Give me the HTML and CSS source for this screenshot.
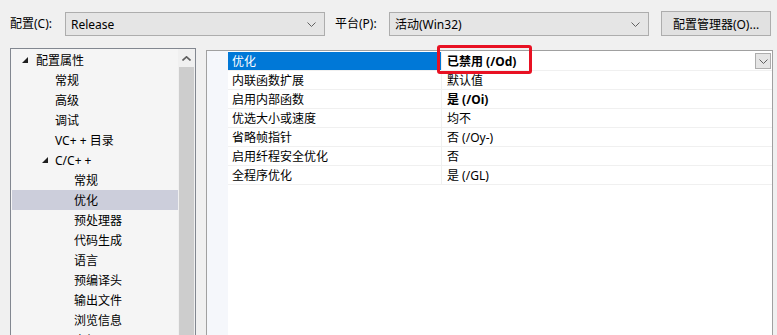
FILE: index.html
```html
<!DOCTYPE html>
<html lang="zh-CN">
<head>
  <meta charset="UTF-8" />
  <title>属性页</title>
  <link rel="stylesheet" href="styles.css">
</head>
<body>

  <!-- 顶部：配置 / 平台 -->
  <div class="toolbar">
    <span class="tb-label">配置(C):</span>
    <div class="combo">
      <span>Release</span>
      <svg class="chev" width="9" height="5" viewBox="0 0 9 5"><path d="M0.5 0.5 L4.5 4.5 L8.5 0.5" fill="none" stroke="#606060" stroke-width="1"/></svg>
    </div>
    <span class="tb-label tb-label2">平台(P):</span>
    <div class="combo">
      <span>活动(Win32)</span>
      <svg class="chev" width="9" height="5" viewBox="0 0 9 5"><path d="M0.5 0.5 L4.5 4.5 L8.5 0.5" fill="none" stroke="#606060" stroke-width="1"/></svg>
    </div>
    <button class="btn">配置管理器(O)...</button>
  </div>

  <div class="main">
    <!-- 左侧树 -->
    <div class="tree">
      <ul class="tree-list">
        <li class="lv0"><i class="tri"></i>配置属性</li>
        <li class="lv1">常规</li>
        <li class="lv1">高级</li>
        <li class="lv1">调试</li>
        <li class="lv1">VC+ + 目录</li>
        <li class="lv1 has-tri"><i class="tri"></i>C/C+ +</li>
        <li class="lv2">常规</li>
        <li class="lv2 selected">优化</li>
        <li class="lv2">预处理器</li>
        <li class="lv2">代码生成</li>
        <li class="lv2">语言</li>
        <li class="lv2">预编译头</li>
        <li class="lv2">输出文件</li>
        <li class="lv2">浏览信息</li>
        <li class="lv2">高级</li>
      </ul>
      <div class="vscroll">
        <div class="vs-up">
          <svg width="9" height="5" viewBox="0 0 9 5"><path d="M0.5 4.5 L4.5 0.8 L8.5 4.5" fill="none" stroke="#606060" stroke-width="1.6"/></svg>
        </div>
        <div class="vs-thumb"></div>
      </div>
    </div>

    <!-- 右侧属性表 -->
    <div class="grid">
      <div class="gutter"></div>
      <div class="rows">
        <div class="row active">
          <div class="cell-name">优化</div>
          <div class="cell-val bold">已禁用 (/Od)
            <span class="drop">
              <svg width="9" height="5" viewBox="0 0 9 5"><path d="M0.5 0.5 L4.5 4.5 L8.5 0.5" fill="none" stroke="#606060" stroke-width="1"/></svg>
            </span>
          </div>
        </div>
        <div class="row">
          <div class="cell-name">内联函数扩展</div>
          <div class="cell-val">默认值</div>
        </div>
        <div class="row">
          <div class="cell-name">启用内部函数</div>
          <div class="cell-val bold">是 (/Oi)</div>
        </div>
        <div class="row">
          <div class="cell-name">优选大小或速度</div>
          <div class="cell-val">均不</div>
        </div>
        <div class="row">
          <div class="cell-name">省略帧指针</div>
          <div class="cell-val">否 (/Oy-)</div>
        </div>
        <div class="row">
          <div class="cell-name">启用纤程安全优化</div>
          <div class="cell-val">否</div>
        </div>
        <div class="row">
          <div class="cell-name">全程序优化</div>
          <div class="cell-val">是 (/GL)</div>
        </div>
      </div>
      <!-- 红框标注 -->
      <div class="mark"></div>
    </div>
  </div>

</body>
</html>
```

FILE: styles.css
```css
html, body {
  margin: 0;
  height: 335px;
  overflow: hidden;
}

body {
  background: #f0f0f0;
  font-family: "Noto Sans", "Noto Sans CJK SC", sans-serif;
  font-size: 12px;
  color: #000;
}

/* 顶部工具栏 */
.toolbar {
  display: flex;
  align-items: center;
  height: 25px;
  padding: 11px 0 0 10px;
}

.tb-label {
  width: 55px;
  line-height: 24px;
}
.tb-label2 {
  width: 54px;
  margin-left: 10px;
}

.combo {
  box-sizing: border-box;
  width: 260px;
  height: 24px;
  margin-top: 1px;
  border: 1px solid #adadad;
  background: #e5e5e5;
  display: flex;
  align-items: center;
  justify-content: space-between;
  padding: 0 8px 0 5px;
}
.combo .chev {
  display: block;
}

.btn {
  box-sizing: border-box;
  width: 110px;
  height: 25px;
  margin-left: 12px;
  border: 1px solid #adadad;
  background: #e1e1e1;
  font-family: inherit;
  font-size: 12px;
  color: #000;
  padding: 0;
}

/* 主体区域 */
.main {
  display: flex;
  align-items: flex-start;
  margin-top: 12px;
  padding-left: 10px;
}

/* 左侧树 */
.tree {
  box-sizing: border-box;
  width: 186px;
  height: 300px;
  border: 1px solid #828790;
  background: #f5f5f5;
  display: flex;
}

.tree-list {
  list-style: none;
  margin: 0;
  padding: 1px 0 0 1px;
  flex: 1;
}

.tree-list li {
  height: 20px;
  line-height: 21px;
  white-space: nowrap;
  position: relative;
}
.tree-list .lv0 { padding-left: 24px; }
.tree-list .lv1 { padding-left: 43px; }
.tree-list .lv2 { padding-left: 62px; }
.tree-list .selected {
  background: #cccedb;
}

.tri {
  position: absolute;
  top: 7px;
  width: 0;
  height: 0;
  border-left: 6px solid transparent;
  border-bottom: 6px solid #1e1e1e;
}
.lv0 .tri { left: 10px; }
.has-tri .tri { left: 30px; }

.vscroll {
  width: 17px;
  display: flex;
  flex-direction: column;
  background: #f0f0f0;
}
.vs-up {
  height: 18px;
  display: flex;
  align-items: center;
  justify-content: center;
}
.vs-thumb {
  flex: 1;
  margin: 0 1px;
  background: #cdcdcd;
}

/* 右侧属性表 */
.grid {
  box-sizing: border-box;
  position: relative;
  width: 567px;
  height: 290px;
  margin: 2px 0 0 10px;
  border-top: 1px solid #a0a0a0;
  border-left: 1px solid #a0a0a0;
  border-right: 1px solid #a0a0a0;
  background: #fff;
  display: flex;
}

.gutter {
  width: 21px;
  background: #f5f7fb;
}

.rows {
  flex: 1;
  padding-top: 1px;
}

.row {
  box-sizing: border-box;
  height: 19px;
  display: flex;
  border-bottom: 1px solid #f0f0f0;
}

.cell-name {
  box-sizing: border-box;
  width: 214px;
  padding: 1px 0 0 4px;
  line-height: 17px;
  border-right: 1px solid #f0f0f0;
  white-space: nowrap;
}
.row.active .cell-name {
  background: #0078d7;
  color: #fff;
}

.cell-val {
  flex: 1;
  padding: 1px 0 0 5px;
  line-height: 17px;
  white-space: nowrap;
  display: flex;
  align-items: center;
}
.bold {
  font-weight: bold;
}

.drop {
  box-sizing: border-box;
  margin: -1px 1px 0 auto;
  width: 16px;
  height: 16px;
  border: 1px solid #adadad;
  background: #e5e5e5;
  display: flex;
  align-items: center;
  justify-content: center;
}

.mark {
  position: absolute;
  left: 230px;
  top: -6px;
  width: 95px;
  height: 29px;
  box-sizing: border-box;
  border: 3px solid #e81123;
  border-radius: 3px;
}
```
